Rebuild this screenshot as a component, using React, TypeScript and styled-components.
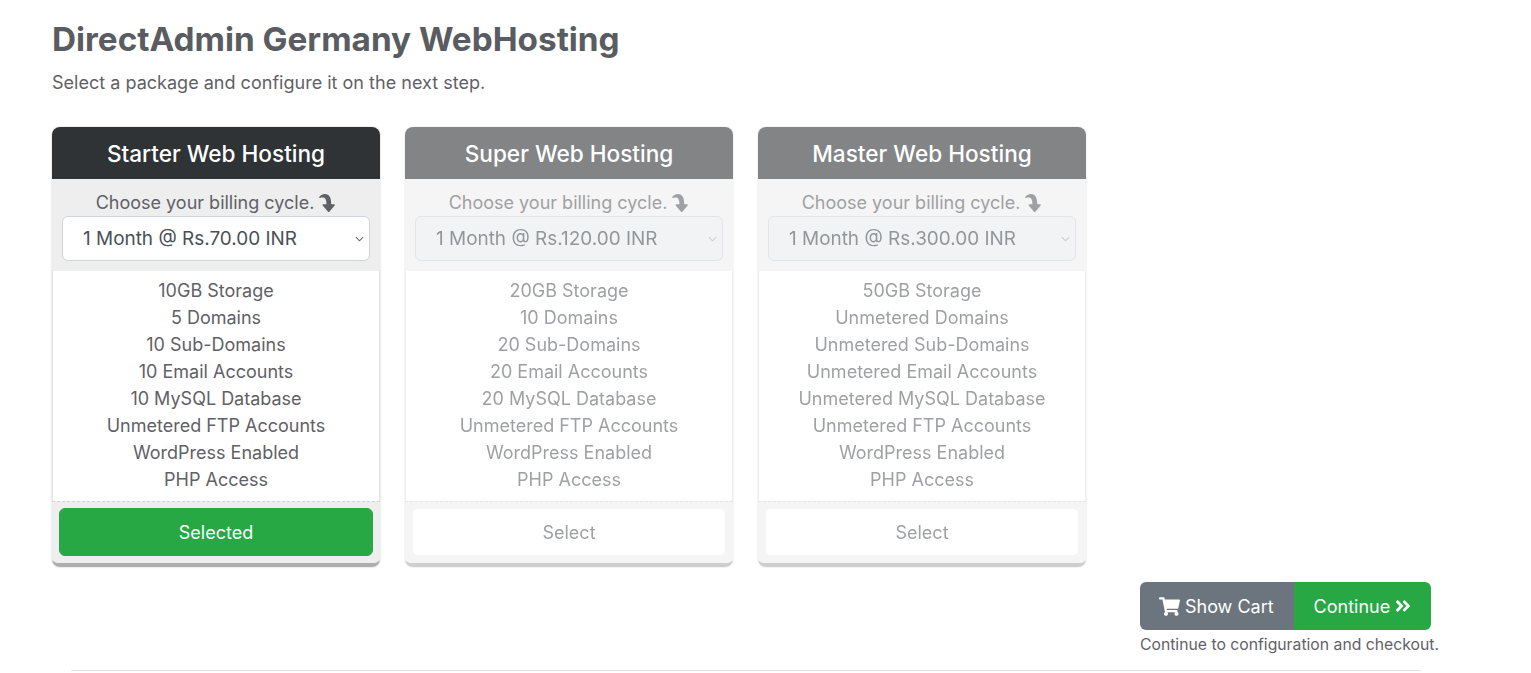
import React from 'react';
import styled, { createGlobalStyle } from 'styled-components';
import { FaShoppingCart, FaAngleDoubleRight, FaShare } from 'react-icons/fa';

const GlobalStyle = createGlobalStyle`
  html, body {
    margin: 0;
    padding: 0;
    background: #fff;
    overflow: hidden;
  }
  body {
    font-family: Inter, "Liberation Sans", sans-serif;
    color: #5f6167;
  }
`;

const chevron = (stroke: string) =>
  `url("data:image/svg+xml,%3csvg xmlns='http://www.w3.org/2000/svg' viewBox='0 0 10 6'%3e%3cpath fill='none' stroke='%23${stroke}' stroke-width='1.2' d='M1 1l4 4 4-4'/%3e%3c/svg%3e")`;

const Page = styled.div`
  height: 673px;
  padding: 20px 0 0 52px;
  box-sizing: border-box;
`;

const Title = styled.h1`
  margin: 0;
  font-size: 33.3px;
  line-height: 38px;
  font-weight: 700;
  color: #595c60;
`;

const Subtitle = styled.p`
  margin: 11px 0 0;
  font-size: 18.04px;
  line-height: 27px;
`;

const Cards = styled.div`
  display: flex;
  gap: 25px;
  margin-top: 31px;
`;

const Card = styled.div<{ $active?: boolean }>`
  width: 328px;
  box-sizing: border-box;
  border-radius: 8px;
  overflow: hidden;
  text-align: center;
  border-bottom: 4px solid #aeaeae;
  box-shadow: 0 0 2px rgba(0, 0, 0, 0.25);
  opacity: ${(p) => (p.$active ? 1 : 0.6)};
`;

const CardHeader = styled.div`
  height: 52px;
  line-height: 54px;
  background: #2f3336;
  color: #fff;
  font-size: 22.6px;
  font-weight: 500;
`;

const Billing = styled.div`
  height: 92px;
  box-sizing: border-box;
  padding: 11px 10px 0;
  background: #eeeeee;
  font-size: 18px;
  line-height: 26px;
`;

const BillingLabel = styled.div`
  display: flex;
  justify-content: center;
  align-items: center;
  gap: 4px;
`;

const CycleSelect = styled.select`
  display: block;
  width: 100%;
  height: 45px;
  padding: 0 0 0 20px;
  box-sizing: border-box;
  appearance: none;
  background: #fff ${chevron('666')} no-repeat right 5px center / 9px 6px;
  border: 1px solid #ced4da;
  border-radius: 6px;
  font-family: Inter, "Liberation Sans", sans-serif;
  font-size: 18.95px;
  color: #495057;
  opacity: 1;

  &:disabled {
    background-color: #e9ecef;
    background-image: ${chevron('aaa')};
    color: #495057;
  }
`;

const Features = styled.ul`
  list-style: none;
  margin: 0;
  padding: 6px 0 8px;
  background: #fff;
  border-left: 1px solid #e4e4e4;
  border-right: 1px solid #e4e4e4;
  font-size: 18px;
  line-height: 27px;
`;

const CardFooter = styled.div`
  padding: 6px 7px 7px;
  background: #eeeeee;
  border-top: 1px dashed #d4d4d4;
`;

const SelectButton = styled.button<{ $selected?: boolean }>`
  display: block;
  width: 100%;
  height: 48px;
  padding: 0;
  border: 1px solid ${(p) => (p.$selected ? '#28a745' : '#eeeeee')};
  border-radius: 6px;
  font-family: inherit;
  font-size: 18px;
  background: ${(p) => (p.$selected ? '#28a745' : '#fff')};
  color: ${(p) => (p.$selected ? '#fff' : '#5f6167')};
`;

const Actions = styled.div`
  display: flex;
  justify-content: flex-end;
  margin-top: 15px;
  padding-right: 92px;
`;

const ActionBox = styled.div`
  display: flex;
  flex-direction: column;
  align-items: flex-start;
`;

const ButtonGroup = styled.div`
  display: flex;
  border-radius: 6px;
  overflow: hidden;
`;

const ActionButton = styled.button<{ $tone: 'gray' | 'green' }>`
  display: flex;
  align-items: center;
  gap: 5px;
  height: 48px;
  padding: 0 20px 0 ${(p) => (p.$tone === 'gray' ? '19px' : '20px')};
  border: 0;
  font-family: inherit;
  font-size: 18px;
  color: #fff;
  background: ${(p) => (p.$tone === 'gray' ? '#6c757d' : '#28a745')};
`;

const Hint = styled.div`
  margin-top: 4px;
  font-size: 15.75px;
  line-height: 22px;
`;

const Rule = styled.hr`
  width: 1350px;
  margin: 14px 0 0 19px;
  border: 0;
  border-top: 1px solid #e2e2e2;
`;

const ArrowIcon = styled(FaShare)`
  width: 18px;
  height: 18px;
  transform: rotate(90deg);
`;

const ContinueIcon = styled(FaAngleDoubleRight)`
  width: 16px;
  height: 18px;
`;

interface Plan {
  name: string;
  cycle: string;
  features: string[];
  selected?: boolean;
}

const plans: Plan[] = [
  {
    name: 'Starter Web Hosting',
    cycle: '1 Month @ Rs.70.00 INR',
    selected: true,
    features: ['10GB Storage', '5 Domains', '10 Sub-Domains', '10 Email Accounts', '10 MySQL Database', 'Unmetered FTP Accounts', 'WordPress Enabled', 'PHP Access'],
  },
  {
    name: 'Super Web Hosting',
    cycle: '1 Month @ Rs.120.00 INR',
    features: ['20GB Storage', '10 Domains', '20 Sub-Domains', '20 Email Accounts', '20 MySQL Database', 'Unmetered FTP Accounts', 'WordPress Enabled', 'PHP Access'],
  },
  {
    name: 'Master Web Hosting',
    cycle: '1 Month @ Rs.300.00 INR',
    features: ['50GB Storage', 'Unmetered Domains', 'Unmetered Sub-Domains', 'Unmetered Email Accounts', 'Unmetered MySQL Database', 'Unmetered FTP Accounts', 'WordPress Enabled', 'PHP Access'],
  },
];

export default function App() {
  return (
    <Page>
      <GlobalStyle />
      <Title>DirectAdmin Germany WebHosting</Title>
      <Subtitle>Select a package and configure it on the next step.</Subtitle>
      <Cards>
        {plans.map((plan) => (
          <Card key={plan.name} $active={plan.selected}>
            <CardHeader>{plan.name}</CardHeader>
            <Billing>
              <BillingLabel>
                Choose your billing cycle. <ArrowIcon />
              </BillingLabel>
              <CycleSelect disabled={!plan.selected} defaultValue={plan.cycle}>
                <option>{plan.cycle}</option>
              </CycleSelect>
            </Billing>
            <Features>
              {plan.features.map((f) => (
                <li key={f}>{f}</li>
              ))}
            </Features>
            <CardFooter>
              <SelectButton $selected={plan.selected}>{plan.selected ? 'Selected' : 'Select'}</SelectButton>
            </CardFooter>
          </Card>
        ))}
      </Cards>
      <Actions>
        <ActionBox>
          <ButtonGroup>
            <ActionButton $tone="gray">
              <FaShoppingCart size={21} /> Show Cart
            </ActionButton>
            <ActionButton $tone="green">
              Continue <ContinueIcon />
            </ActionButton>
          </ButtonGroup>
          <Hint>Continue to configuration and checkout.</Hint>
        </ActionBox>
      </Actions>
      <Rule />
    </Page>
  );
}
